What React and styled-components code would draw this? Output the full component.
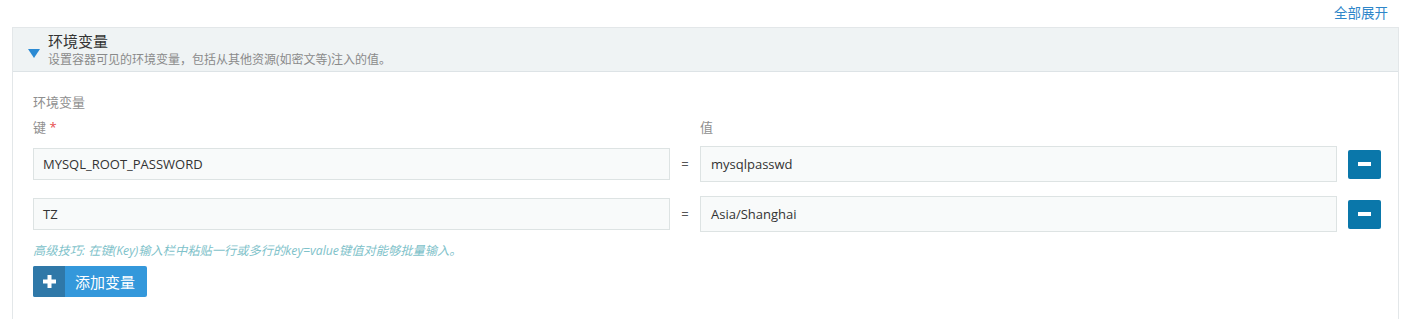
import React from "react";
import styled, { createGlobalStyle } from "styled-components";

const GlobalStyle = createGlobalStyle`
  body {
    margin: 0;
    background: #fff;
    font-family: "Open Sans", "Noto Sans CJK SC", sans-serif;
    color: #333;
  }
`;

const envs = [
  { key: "MYSQL_ROOT_PASSWORD", value: "mysqlpasswd" },
  { key: "TZ", value: "Asia/Shanghai" },
];

const App = () => {
  return (
    <Page>
      <GlobalStyle />
      <TopBar>
        <ExpandLink href="#">全部展开</ExpandLink>
      </TopBar>
      <Panel>
        <PanelHeader>
          <Caret />
          <HeaderText>
            <Title>环境变量</Title>
            <Subtitle>设置容器可见的环境变量，包括从其他资源(如密文等)注入的值。</Subtitle>
          </HeaderText>
        </PanelHeader>
        <PanelBody>
          <SectionLabel>环境变量</SectionLabel>
          <Grid>
            <FieldLabel>
              键 <Required>*</Required>
            </FieldLabel>
            <span />
            <FieldLabel>值</FieldLabel>
            <span />
            {envs.map((env) => (
              <React.Fragment key={env.key}>
                <KeyInput>{env.key}</KeyInput>
                <Equals>=</Equals>
                <ValueInput>{env.value}</ValueInput>
                <RemoveButton type="button" aria-label="remove">
                  <span />
                </RemoveButton>
              </React.Fragment>
            ))}
          </Grid>
          <Hint>高级技巧: 在键(Key)输入栏中粘贴一行或多行的key=value键值对能够批量输入。</Hint>
          <AddButton type="button">
            <AddIcon>
              <svg width="13" height="13" viewBox="0 0 13 13">
                <rect x="4.5" y="0" width="4" height="13" fill="#fff" />
                <rect x="0" y="4.5" width="13" height="4" fill="#fff" />
              </svg>
            </AddIcon>
            <AddText>添加变量</AddText>
          </AddButton>
        </PanelBody>
      </Panel>
    </Page>
  );
};

const Page = styled.div`
  width: 1412px;
  height: 319px;
  overflow: hidden;
`;

const TopBar = styled.div`
  height: 27px;
  display: flex;
  justify-content: flex-end;
  align-items: center;
  padding-right: 24px;
`;

const ExpandLink = styled.a`
  font-size: 13.5px;
  color: #2e86c9;
  text-decoration: none;
  line-height: 18px;
  margin-top: -2px;
`;

const Panel = styled.section`
  margin: 0 13px 0 12px;
  border: 1px solid #e3e7e9;
  border-bottom: none;
  height: 300px;
`;

const PanelHeader = styled.div`
  display: flex;
  align-items: center;
  background: #eff3f4;
  border-bottom: 1px solid #dde3e6;
  height: 43px;
  padding-left: 15px;
`;

const Caret = styled.span`
  width: 0;
  height: 0;
  border-left: 6px solid transparent;
  border-right: 6px solid transparent;
  border-top: 9px solid #2b8ad3;
  margin-top: 8px;
  margin-right: 8px;
`;

const HeaderText = styled.div`
  display: flex;
  flex-direction: column;
`;

const Title = styled.div`
  font-size: 15px;
  line-height: 18px;
  color: #333;
`;

const Subtitle = styled.div`
  font-size: 12px;
  line-height: 16px;
  color: #8a8a8a;
  margin-top: 2px;
`;

const PanelBody = styled.div`
  padding: 21px 16px 24px 20px;
`;

const SectionLabel = styled.div`
  font-size: 13px;
  line-height: 18px;
  color: #8f8f8f;
`;

const Grid = styled.div`
  display: grid;
  grid-template-columns: 637px 30px 637px 44px;
  align-items: center;
  row-gap: 14px;
  margin-top: 7px;
  & > :nth-child(-n + 4) {
    margin-bottom: -4px;
  }
`;

const FieldLabel = styled.div`
  font-size: 13px;
  line-height: 18px;
  color: #8f8f8f;
`;

const Required = styled.span`
  color: #e64d4d;
`;

const InputBox = styled.div`
  box-sizing: border-box;
  background: #f8fafa;
  border: 1px solid #dde3e3;
  font-size: 13px;
  color: #333;
  display: flex;
  align-items: center;
`;

const KeyInput = styled(InputBox)`
  height: 32px;
  padding-left: 9px;
`;

const ValueInput = styled(InputBox)`
  height: 36px;
  padding-left: 10px;
`;

const Equals = styled.div`
  text-align: center;
  font-size: 13px;
  color: #555;
`;

const RemoveButton = styled.button`
  justify-self: end;
  width: 33px;
  height: 29px;
  border: none;
  border-radius: 2px;
  background: #0a77aa;
  display: flex;
  align-items: center;
  justify-content: center;
  padding: 0;
  span {
    display: block;
    width: 13px;
    height: 4px;
    background: #fff;
  }
`;

const Hint = styled.div`
  margin-top: 10px;
  font-size: 12.25px;
  line-height: 18px;
  font-style: italic;
  color: #80c2ca;
`;

const AddButton = styled.button`
  margin-top: 6px;
  display: flex;
  height: 31px;
  width: 114px;
  padding: 0;
  border: none;
  border-radius: 2px;
  overflow: hidden;
  background: #3498db;
  cursor: pointer;
`;

const AddIcon = styled.span`
  width: 32px;
  background: #2f78a8;
  display: flex;
  align-items: center;
  justify-content: center;
`;

const AddText = styled.span`
  flex: 1;
  display: flex;
  align-items: center;
  justify-content: center;
  padding-right: 2px;
  color: #fff;
  font-size: 15px;
  font-family: "Noto Sans CJK SC", sans-serif;
`;

export default App;
